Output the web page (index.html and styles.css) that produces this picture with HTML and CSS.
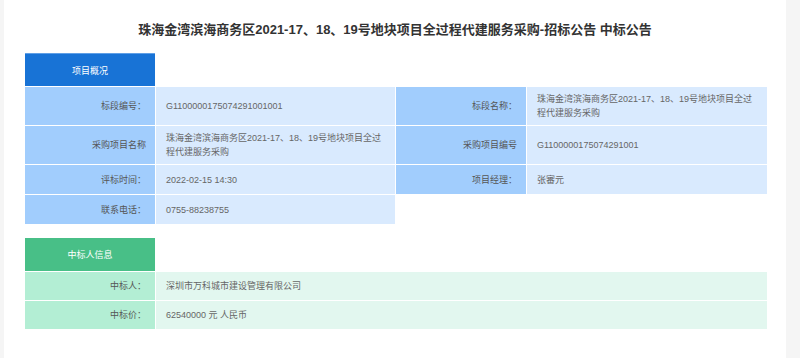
FILE: index.html
```html
<!DOCTYPE html>
<html lang="zh-CN">
<head>
<meta charset="utf-8">
<title>中标公告</title>
<link rel="stylesheet" href="styles.css">
</head>
<body>
<div class="page">
  <h1 class="title">珠海金湾滨海商务区2021-17、18、19号地块项目全过程代建服务采购-招标公告 中标公告</h1>

  <section class="block blue">
    <div class="tab">项目概况</div>
    <div class="grid four">
      <div class="lab">标段编号：</div>
      <div class="val">G1100000175074291001001</div>
      <div class="lab">标段名称：</div>
      <div class="val">珠海金湾滨海商务区2021-17、18、19号地块项目全过程代建服务采购</div>

      <div class="lab">采购项目名称</div>
      <div class="val">珠海金湾滨海商务区2021-17、18、19号地块项目全过程代建服务采购</div>
      <div class="lab">采购项目编号</div>
      <div class="val">G1100000175074291001</div>

      <div class="lab">评标时间：</div>
      <div class="val">2022-02-15 14:30</div>
      <div class="lab">项目经理：</div>
      <div class="val">张審元</div>

      <div class="lab">联系电话：</div>
      <div class="val">0755-88238755</div>
    </div>
  </section>

  <section class="block green">
    <div class="tab">中标人信息</div>
    <div class="grid two">
      <div class="lab">中标人：</div>
      <div class="val">深圳市万科城市建设管理有限公司</div>
      <div class="lab">中标价：</div>
      <div class="val">62540000 元 人民币</div>
    </div>
  </section>
</div>
</body>
</html>
```

FILE: styles.css
```css
html, body {
  margin: 0;
  padding: 0;
}
body {
  background: #f5f5f5;
  font-family: "Liberation Sans", "Noto Sans CJK SC", sans-serif;
}
.page {
  margin-left: 4px;
  width: 782px;
  min-height: 358px;
  background: #ffffff;
  box-sizing: border-box;
  padding: 22px 0 0 21px;
}
.title {
  margin: 0 0 15px -21px;
  font-size: 13px;
  line-height: 16px;
  font-weight: bold;
  color: #333333;
  text-align: center;
}
.block {
  width: 742px;
}
.green {
  margin-top: 14px;
}
.tab {
  width: 130px;
  height: 33px;
  box-sizing: border-box;
  display: flex;
  align-items: center;
  justify-content: center;
  color: #ffffff;
  font-size: 9px;
  margin-bottom: 1px;
}
.blue .tab {
  background: #1873d6;
  border-top: 1px solid #5f9fe6;
}
.green .tab {
  background: #48bf87;
}
.grid {
  display: grid;
  gap: 1px;
}
.four {
  grid-template-columns: 130px 239px 130px 240px;
}
.two {
  grid-template-columns: 130px 611px;
}
.lab, .val {
  font-size: 9px;
  line-height: 14px;
  min-height: 29px;
  box-sizing: border-box;
  padding: 5px 10px;
  display: flex;
  align-items: center;
}
.green .lab, .green .val {
  min-height: 28px;
}
.lab {
  justify-content: flex-end;
  color: #555555;
  padding-right: 9px;
}
.val {
  color: #666666;
}
.blue .lab { background: #a1cdfd; }
.blue .val { background: #d9eafe; }
.green .lab { background: #b3eed4; }
.green .val { background: #e2f7ef; }
```
